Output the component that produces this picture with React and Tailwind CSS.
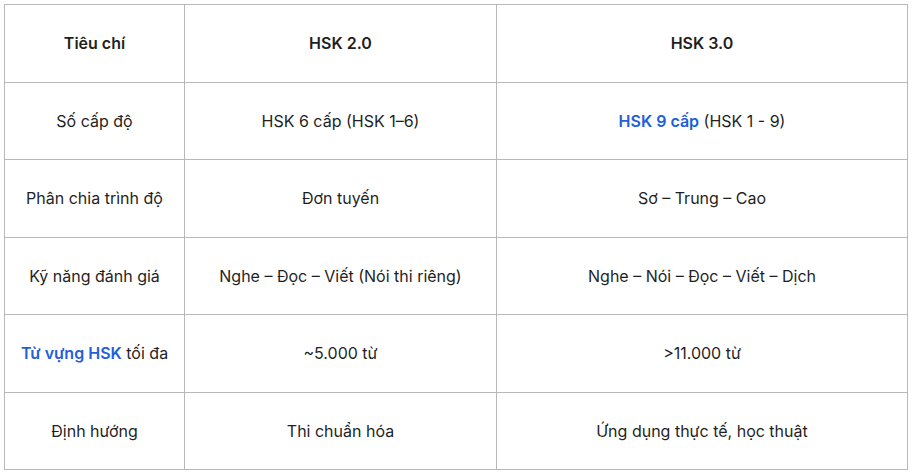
import React from "react";

const B = "text-[#2160d9] font-semibold";

const rows = [
  [<>Số cấp độ</>, <>HSK 6 cấp (HSK 1–6)</>, <><span className={B}>HSK 9 cấp</span> (HSK 1 - 9)</>],
  [<>Phân chia trình độ</>, <>Đơn tuyến</>, <>Sơ – Trung – Cao</>],
  [<>Kỹ năng đánh giá</>, <>Nghe – Đọc – Viết (Nói thi riêng)</>, <>Nghe – Nói – Đọc – Viết – Dịch</>],
  [<><span className={B}>Từ vựng HSK</span> tối đa</>, <>~5.000 từ</>, <>&gt;11.000 từ</>],
  [<>Định hướng</>, <>Thi chuẩn hóa</>, <>Ứng dụng thực tế, học thuật</>],
];

export default function App() {
  return (
    <div className="w-[920px] h-[475px] bg-white pl-[4px] pt-[4px]" style={{ fontFamily: "Inter, 'Noto Sans', sans-serif" }}>
      <table className="border-collapse text-[16px] text-[#1f1f1f] table-fixed w-[903px]">
        <colgroup>
          <col className="w-[180px]" />
          <col className="w-[312px]" />
          <col className="w-[411px]" />
        </colgroup>
        <thead>
          <tr className="h-[77.5px]">
            {["Tiêu chí", "HSK 2.0", "HSK 3.0"].map((h) => (
              <th key={h} className="border border-[#b8b8b8] text-center font-semibold p-0">{h}</th>
            ))}
          </tr>
        </thead>
        <tbody>
          {rows.map((r, i) => (
            <tr key={i} className="h-[77.5px]">
              {r.map((c, j) => (
                <td key={j} className="border border-[#b8b8b8] text-center p-0">{c}</td>
              ))}
            </tr>
          ))}
        </tbody>
      </table>
    </div>
  );
}
